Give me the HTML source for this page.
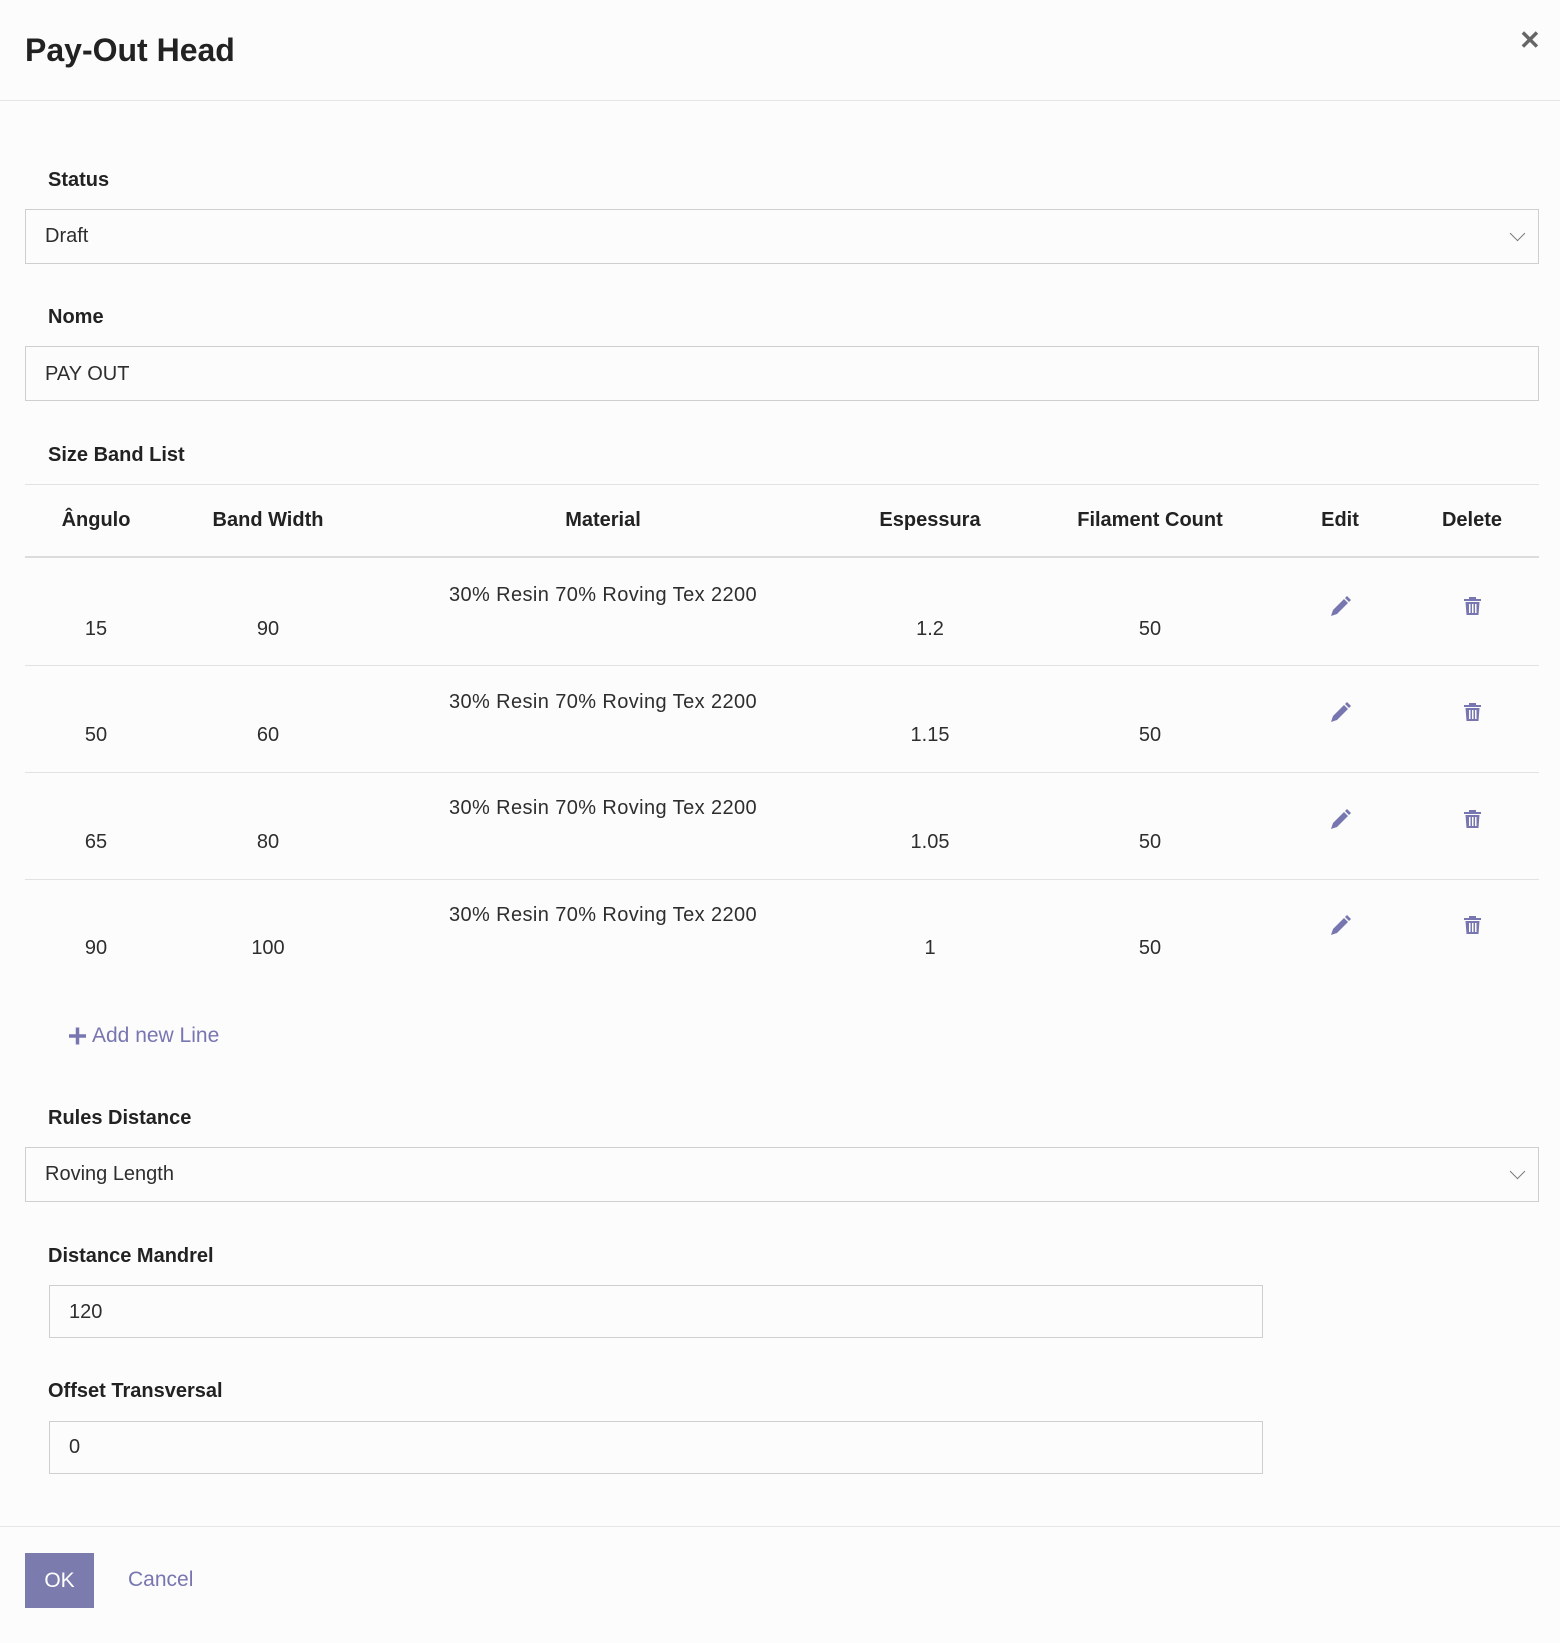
<!DOCTYPE html>
<html><head><meta charset="utf-8"><style>
*{box-sizing:border-box;margin:0;padding:0}
body{width:1560px;height:1643px;background:#fcfcfc;font-family:"Liberation Sans",sans-serif;color:#2e2e2e;position:relative;overflow:hidden}
.a{position:absolute}
.t{position:absolute;font-size:20px;line-height:24px;white-space:nowrap}
.b{font-weight:bold;color:#222}
.c{transform:translateX(-50%)}
.m{letter-spacing:0.4px}
.box{position:absolute;border:1px solid #cfcfcf;background:#fcfcfc}
.hl{position:absolute;left:25px;width:1514px;height:1px;background:#e2e2e2}
.chev{position:absolute;width:11px;height:11px;border-right:1.5px solid #777;border-bottom:1.5px solid #777;transform:rotate(45deg)}
</style></head><body>
<div class="t b" style="left:25px;top:32px;font-size:32px;line-height:36px">Pay-Out Head</div>
<div class="t" style="left:1519px;top:28px;font-size:26px;color:#666;font-weight:bold">✕</div>
<div class="a" style="left:0;top:100px;width:1560px;height:1px;background:#e6e6e6"></div>

<div class="t b" style="left:48px;top:168px">Status</div>
<div class="box" style="left:25px;top:209px;width:1514px;height:55px"></div>
<div class="t" style="left:45px;top:224px">Draft</div>
<div class="chev" style="left:1512px;top:228px"></div>

<div class="t b" style="left:48px;top:305px">Nome</div>
<div class="box" style="left:25px;top:346px;width:1514px;height:55px"></div>
<div class="t" style="left:45px;top:362px">PAY OUT</div>

<div class="t b" style="left:48px;top:443px">Size Band List</div>
<div class="hl" style="top:484px"></div>
<div class="t b c" style="left:96px;top:508px">Ângulo</div>
<div class="t b c" style="left:268px;top:508px">Band Width</div>
<div class="t b c" style="left:603px;top:508px">Material</div>
<div class="t b c" style="left:930px;top:508px">Espessura</div>
<div class="t b c" style="left:1150px;top:508px">Filament Count</div>
<div class="t b c" style="left:1340px;top:508px">Edit</div>
<div class="t b c" style="left:1472px;top:508px">Delete</div>
<div class="hl" style="top:556px;height:2px;background:#dcdcdc"></div>

<div class="t c" style="left:96px;top:617px">15</div><div class="t c" style="left:268px;top:617px">90</div><div class="t c m" style="left:603px;top:583px">30% Resin 70% Roving Tex 2200</div><div class="t c" style="left:930px;top:617px">1.2</div><div class="t c" style="left:1150px;top:617px">50</div>
<div class="hl" style="top:665px"></div>
<div class="t c" style="left:96px;top:723px">50</div><div class="t c" style="left:268px;top:723px">60</div><div class="t c m" style="left:603px;top:690px">30% Resin 70% Roving Tex 2200</div><div class="t c" style="left:930px;top:723px">1.15</div><div class="t c" style="left:1150px;top:723px">50</div>
<div class="hl" style="top:772px"></div>
<div class="t c" style="left:96px;top:830px">65</div><div class="t c" style="left:268px;top:830px">80</div><div class="t c m" style="left:603px;top:796px">30% Resin 70% Roving Tex 2200</div><div class="t c" style="left:930px;top:830px">1.05</div><div class="t c" style="left:1150px;top:830px">50</div>
<div class="hl" style="top:879px"></div>
<div class="t c" style="left:96px;top:936px">90</div><div class="t c" style="left:268px;top:936px">100</div><div class="t c m" style="left:603px;top:903px">30% Resin 70% Roving Tex 2200</div><div class="t c" style="left:930px;top:936px">1</div><div class="t c" style="left:1150px;top:936px">50</div>

<svg class="a" style="left:0;top:0" width="1560" height="1100">
<defs>
<g id="pen" fill="#7776b0"><path d="M0 19 L2 13 L13 2 L17 6 L6 17 Z"/><path d="M14 1 L16 -1 L20 3 L18 5 Z"/></g>
<g id="bin" fill="#7776b0"><rect x="0" y="2" width="17" height="2"/><rect x="5" y="0" width="7" height="3"/><path d="M1.5 5 H15.5 L14.5 18 H2.5 Z"/><rect x="5" y="7" width="1.5" height="9" fill="#fcfcfc"/><rect x="8" y="7" width="1.5" height="9" fill="#fcfcfc"/><rect x="11" y="7" width="1.5" height="9" fill="#fcfcfc"/></g>
</defs>
<use href="#pen" x="1331" y="597"/><use href="#bin" x="1464" y="597"/>
<use href="#pen" x="1331" y="703"/><use href="#bin" x="1464" y="703"/>
<use href="#pen" x="1331" y="810"/><use href="#bin" x="1464" y="810"/>
<use href="#pen" x="1331" y="916"/><use href="#bin" x="1464" y="916"/>
<path d="M69 1036 H86 M77.5 1027.5 V1044.5" stroke="#7776b0" stroke-width="3.5"/>
</svg>
<div class="t" style="left:92px;top:1024px;color:#7776b0;font-size:21px">Add new Line</div>

<div class="t b" style="left:48px;top:1106px">Rules Distance</div>
<div class="box" style="left:25px;top:1147px;width:1514px;height:55px"></div>
<div class="t" style="left:45px;top:1162px">Roving Length</div>
<div class="chev" style="left:1512px;top:1166px"></div>

<div class="t b" style="left:48px;top:1244px">Distance Mandrel</div>
<div class="box" style="left:49px;top:1285px;width:1214px;height:53px"></div>
<div class="t" style="left:69px;top:1300px">120</div>

<div class="t b" style="left:48px;top:1379px">Offset Transversal</div>
<div class="box" style="left:49px;top:1421px;width:1214px;height:53px"></div>
<div class="t" style="left:69px;top:1435px">0</div>

<div class="a" style="left:0;top:1526px;width:1560px;height:1px;background:#e6e6e6"></div>
<div class="a" style="left:25px;top:1553px;width:69px;height:55px;background:#7c7bad;color:#fff;font-size:21px;line-height:55px;text-align:center">OK</div>
<div class="t" style="left:128px;top:1568px;color:#7776b0;font-size:21px">Cancel</div>
</body></html>
